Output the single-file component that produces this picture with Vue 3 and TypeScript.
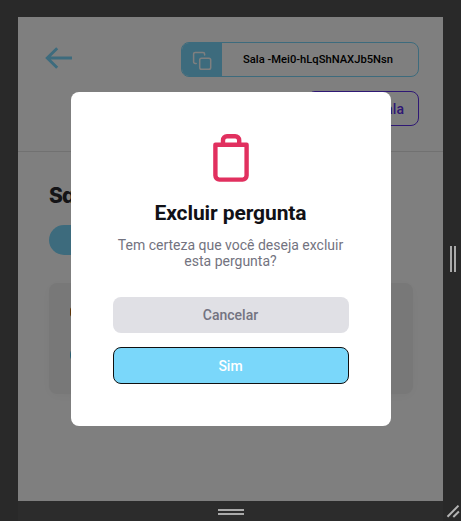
<script setup lang="ts">
import { ref } from 'vue'

const roomCode = ref('-Mei0-hLqShNAXJb5Nsn')
const modalOpen = ref(true)

function closeModal(): void {
  modalOpen.value = false
}
</script>

<template>
  <div class="stage">
    <div class="device">
      <header class="header">
        <div class="header-row">
          <svg class="back" viewBox="0 0 28 24" fill="none">
            <path d="M27 12H3M12.2 2.2 2.3 12l9.900 9.800" stroke="#7ad7fa" stroke-width="3" />
          </svg>
          <button class="room-code">
            <span class="copy">
              <svg viewBox="0 0 20 20" fill="none" stroke="#fff" stroke-width="1.500" stroke-linecap="round" stroke-linejoin="round">
                <rect x="7.700" y="7.200" width="11" height="11" rx="1.800" />
                <path d="M4.200 12.400H3.200a1.600 1.600 0 0 1-1.600-1.600V3a1.600 1.600 0 0 1 1.600-1.600H11A1.600 1.600 0 0 1 12.600 3v.9" />
              </svg>
            </span>
            <span class="code">Sala {{ roomCode }}</span>
          </button>
        </div>
        <button class="end-room">Encerrar sala</button>
      </header>
      <main class="content">
        <h1 class="room-title">Sala</h1>
        <span class="count"></span>
        <article class="question">
          <span class="avatar"></span>
          <span class="like"></span>
        </article>
      </main>
      <div v-if="modalOpen" class="overlay">
        <section class="modal" role="dialog">
          <svg class="trash" viewBox="0 0 36 50" fill="none" stroke="#e1305f" stroke-width="4.400" stroke-linejoin="round">
            <path d="M2.400 12.700h31.200v30.900a4 4 0 0 1-4 4H6.400a4 4 0 0 1-4-4z" />
            <path d="M10 12V8.200a4 4 0 0 1 4-4h8.200a4 4 0 0 1 4 4V12" />
          </svg>
          <h2 class="modal-title">Excluir pergunta</h2>
          <p class="modal-text">Tem certeza que você deseja excluir esta pergunta?</p>
          <button class="action cancel" @click="closeModal">Cancelar</button>
          <button class="action confirm" @click="closeModal">Sim</button>
        </section>
      </div>
    </div>
    <div class="side-bar"><span class="grip vertical"></span></div>
    <div class="bottom-bar"><span class="grip"></span></div>
    <div class="corner">
      <svg viewBox="0 0 18 20" fill="none" stroke="#b4b4b4" stroke-width="2">
        <path d="M4.500 15.800 15.500 4.600M10.300 16 15.900 10.500" />
      </svg>
    </div>
  </div>
</template>

<style>
body {
  margin: 0;
}
</style>

<style scoped>
* {
  box-sizing: border-box;
}
.stage {
  width: 461px;
  height: 521px;
  padding: 17px 0 0 18px;
  display: grid;
  grid-template: 484px 20px / 425px 18px;
  background: #292929;
  font-family: Roboto, sans-serif;
  overflow: hidden;
}
.device {
  position: relative;
  background: #fff;
  overflow: hidden;
}
button {
  font-family: inherit;
  margin: 0;
  padding: 0;
}
.header {
  height: 135px;
  padding: 25px 24px 0 27px;
  border-bottom: 1px solid #e2e2e2;
  display: flex;
  flex-direction: column;
  gap: 14px;
}
.header-row {
  display: flex;
  justify-content: space-between;
}
.back {
  width: 28px;
  height: 24px;
  margin-top: 4px;
}
.room-code {
  width: 238px;
  height: 35px;
  display: flex;
  border: 1px solid #7ad7fa;
  border-radius: 8px;
  background: #fff;
  overflow: hidden;
}
.copy {
  width: 40px;
  height: 33px;
  background: #7ad7fa;
  display: flex;
  align-items: center;
  justify-content: center;
}
.copy svg {
  width: 20px;
  height: 20px;
  margin-top: 3px;
}
.code {
  flex: 1;
  line-height: 33px;
  font-size: 11.2px;
  font-weight: 500;
  text-align: center;
  color: #000;
  padding-right: 4px;
}
.end-room {
  align-self: flex-end;
  height: 35px;
  padding: 0 14px;
  border: 1px solid #5e30ea;
  border-radius: 8px;
  background: #fff;
  color: #5e30ea;
  font-size: 14px;
  font-weight: 500;
}
.content {
  padding: 30px 30px 0 31px;
}
.room-title {
  margin: 0;
  height: 43px;
  line-height: 28px;
  font-family: Inter, sans-serif;
  font-feature-settings: "cv11";
  font-size: 21px;
  font-weight: 800;
  letter-spacing: -0.8px;
  color: #29292e;
}
.count {
  display: block;
  width: 110px;
  height: 30px;
  border-radius: 15px;
  background: #7ad7fa;
}
.question {
  height: 111px;
  margin-top: 28px;
  padding: 24px 21px;
  border-radius: 8px;
  background: #f0f0f0;
  box-shadow: 0 2px 12px rgba(0, 0, 0, 0.04);
  display: flex;
  flex-direction: column;
  gap: 31px;
}
.avatar {
  width: 10px;
  height: 10px;
  border-radius: 3px;
  background: #b86a10;
}
.like {
  width: 12px;
  height: 14px;
  border-radius: 6px;
  background: #55bce2;
}
.overlay {
  position: absolute;
  inset: 0;
  background: rgba(0, 0, 0, 0.5);
  display: flex;
  align-items: center;
  justify-content: center;
}
.modal {
  width: 320px;
  height: 334px;
  padding: 40px 42px 0;
  border-radius: 8px;
  background: #fff;
  display: flex;
  flex-direction: column;
  align-items: center;
}
.trash {
  width: 36px;
  height: 50px;
}
.modal-title {
  margin: 18px 0 0;
  line-height: 26px;
  font-size: 21px;
  font-weight: 700;
  letter-spacing: -0.1px;
  color: #111116;
}
.modal-text {
  margin: 11px 0 28px;
  line-height: 16px;
  font-size: 14px;
  text-align: center;
  color: #737380;
}
.action {
  width: 236px;
  height: 36px;
  flex: none;
  border: 0;
  border-radius: 8px;
  font-size: 14px;
  font-weight: 500;
}
.cancel {
  background: #e0e0e5;
  color: #737380;
}
.confirm {
  height: 37px;
  margin-top: 14px;
  border: 1px solid #101010;
  background: #7ad7fa;
  color: #fff;
}
.side-bar,
.bottom-bar {
  display: flex;
  align-items: center;
  justify-content: center;
}
.bottom-bar {
  background: #2c2c2c;
  padding-top: 2px;
}
.grip {
  width: 26px;
  height: 6px;
  border: solid #aaa;
  border-width: 2px 0;
}
.grip.vertical {
  width: 6px;
  height: 26px;
  border-width: 0 2px;
  margin-left: 2px;
}
.corner svg {
  display: block;
  width: 18px;
  height: 20px;
}
</style>
